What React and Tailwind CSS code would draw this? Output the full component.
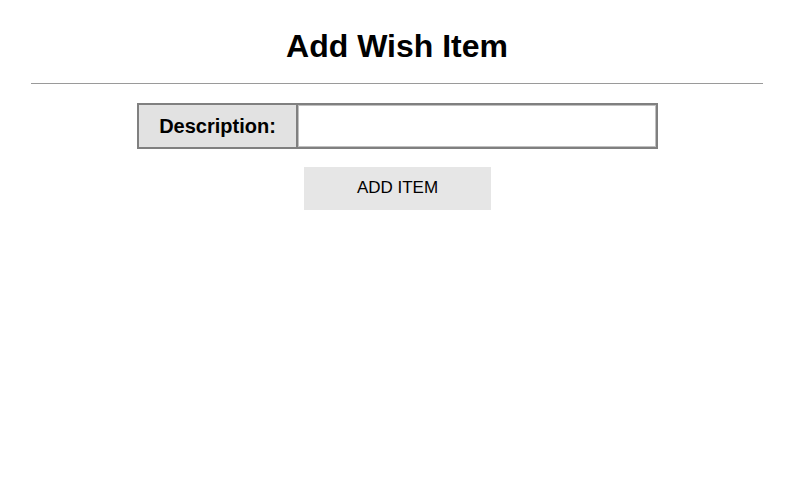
export default function App() {
  return (
    <div className="min-h-[504px] bg-white text-black" style={{ fontFamily: '"Liberation Sans", Arial, sans-serif' }}>
      <h1 className="pr-px pt-[28px] text-center text-[32px] font-bold leading-[36px]">Add Wish Item</h1>
      <div className="ml-[31px] mr-[32px] mt-[19px] border-t border-[#9a9a9a]" />
      <div className="mt-[19px] flex justify-center">
        <div className="flex h-[46px] w-[521px] border-2 border-[#808080]">
          <div className="flex w-[159px] items-center justify-center border-r-2 border-[#808080] bg-[#e2e2e2] text-[20px] font-bold">
            Description:
          </div>
          <input type="text" className="min-w-0 flex-1 border border-[#c0c0c0] bg-white outline-none" />
        </div>
      </div>
      <div className="mt-[18px] flex justify-center">
        <button className="h-[43px] w-[187px] bg-[#e6e6e6] pb-[2px] text-[17px] leading-none">ADD ITEM</button>
      </div>
    </div>
  );
}
